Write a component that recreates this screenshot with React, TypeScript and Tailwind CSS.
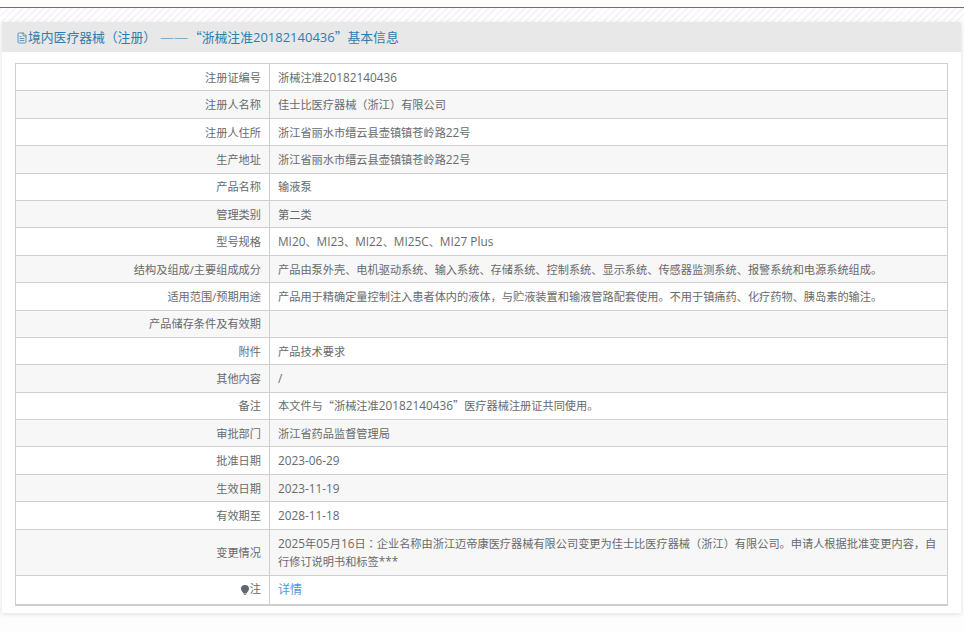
import type { ReactNode } from "react";
import { FileText } from "lucide-react";

const rows: [string, string][] = [
  ["注册证编号", "浙械注准20182140436"],
  ["注册人名称", "佳士比医疗器械（浙江）有限公司"],
  ["注册人住所", "浙江省丽水市缙云县壶镇镇苍岭路22号"],
  ["生产地址", "浙江省丽水市缙云县壶镇镇苍岭路22号"],
  ["产品名称", "输液泵"],
  ["管理类别", "第二类"],
  ["型号规格", "MI20、MI23、MI22、MI25C、MI27 Plus"],
  ["结构及组成/主要组成成分", "产品由泵外壳、电机驱动系统、输入系统、存储系统、控制系统、显示系统、传感器监测系统、报警系统和电源系统组成。"],
  ["适用范围/预期用途", "产品用于精确定量控制注入患者体内的液体，与贮液装置和输液管路配套使用。不用于镇痛药、化疗药物、胰岛素的输注。"],
  ["产品储存条件及有效期", ""],
  ["附件", "产品技术要求"],
  ["其他内容", "/"],
  ["备注", "本文件与“浙械注准20182140436”医疗器械注册证共同使用。"],
  ["审批部门", "浙江省药品监督管理局"],
  ["批准日期", "2023-06-29"],
  ["生效日期", "2023-11-19"],
  ["有效期至", "2028-11-18"],
];

// latin runs sit a bit larger than the CJK, brackets come from the KR cut
function Mixed({ text }: { text: string }) {
  const parts = text.split(/([A-Za-z0-9\-/* ]+|[（）：]|[“”])/).filter(Boolean);
  return (
    <>
      {parts.map((p, i) =>
        /^[A-Za-z0-9\-/* ]+$/.test(p) ? (
          <span key={i} className="text-[11.8px] leading-none">{p}</span>
        ) : /^[（）：]$/.test(p) ? (
          <span key={i} className="font-['Noto_Sans_CJK_KR'] leading-none">{p}</span>
        ) : /^[“”]$/.test(p) ? (
          <span key={i} className="font-['Noto_Sans_CJK_SC'] leading-none">{p}</span>
        ) : (
          <span key={i}>{p}</span>
        )
      )}
    </>
  );
}

function Row({ label, even, pad = true, className, children }: { label: ReactNode; even: boolean; pad?: boolean; className: string; children: ReactNode }) {
  return (
    <div className={`flex border-b border-[#cfcfcf] last:border-b-0 ${className} ${even ? "bg-[#f7f7f7]" : "bg-white"}`}>
      <div className={`w-[254px] shrink-0 flex items-center justify-end gap-px pr-2 border-r border-[#cfcfcf] ${pad ? "pt-[2px]" : ""}`}>{label}</div>
      <div className={`flex-1 min-w-0 flex items-center pl-2 pr-2 ${pad ? "pt-[2px]" : ""}`}>{children}</div>
    </div>
  );
}

export default function App() {
  return (
    <div className="w-[964px] h-[632px] overflow-hidden bg-[#fdfdfd] text-[11.2px] text-[#676a6c] font-['Open_Sans','Noto_Sans_CJK_SC',sans-serif]">
      <div className="h-[7px] bg-[#fffdf9]" />
      <div className="h-px bg-[#2a86ad]" />
      <div className="h-[14px] bg-[repeating-linear-gradient(135deg,#f7f3f8_0,#f7f3f8_2px,#ffffff_2px,#ffffff_5px)]" />
      <div className="ml-[2px] mr-[3px] h-[591px] bg-white shadow-[0_1px_5px_rgba(0,0,0,0.12)]">
        <div className="h-[30px] bg-[#e8e8e8] pl-[14px] pt-[2px] flex items-center text-[12.8px] text-[#2f7cb0]">
          <FileText size={12} strokeWidth={1.5} className="shrink-0" />
          <span>
            <Mixed text="境内医疗器械（注册）" />
            <span className="ml-[4px] mr-px text-[14px] font-light leading-none">——</span>
            <Mixed text="“浙械注准" />
            <span className="text-[13px] leading-none">20182140436</span>
            <Mixed text="”基本信息" />
          </span>
        </div>
        <div className="mx-[13px] mt-[11px] border border-[#cfcfcf] border-b-2">
          {rows.map(([label, value], i) => (
            <Row key={label} label={label} even={i % 2 === 1} className="h-[27.4px]">
              <span><Mixed text={value} /></span>
            </Row>
          ))}
          <Row label="变更情况" even={true} className="h-[46px]">
            <p className="leading-[18px]">
              <Mixed text="2025年05月16日：企业名称由浙江迈帝康医疗器械有限公司变更为佳士比医疗器械（浙江）有限公司。申请人根据批准变更内容，自行修订说明书和标签***" />
            </p>
          </Row>
          <Row
            label={
              <>
                <svg width="8" height="10" viewBox="0 0 8 10">
                  <path d="M4 0a4 4 0 0 1 4 4c0 2-2 3-2.500 4.500h-3C2 7 0 6 0 4a4 4 0 0 1 4-4z" fill="#5f6770" />
                  <rect x="2.800" y="8.800" width="2.400" height="1.200" fill="#8a8f94" />
                </svg>
                注
              </>
            }
            even={false}
            pad={false}
            className="h-[28px]"
          >
            <span className="text-[12px] text-[#4a9be0]">详情</span>
          </Row>
        </div>
      </div>
    </div>
  );
}
